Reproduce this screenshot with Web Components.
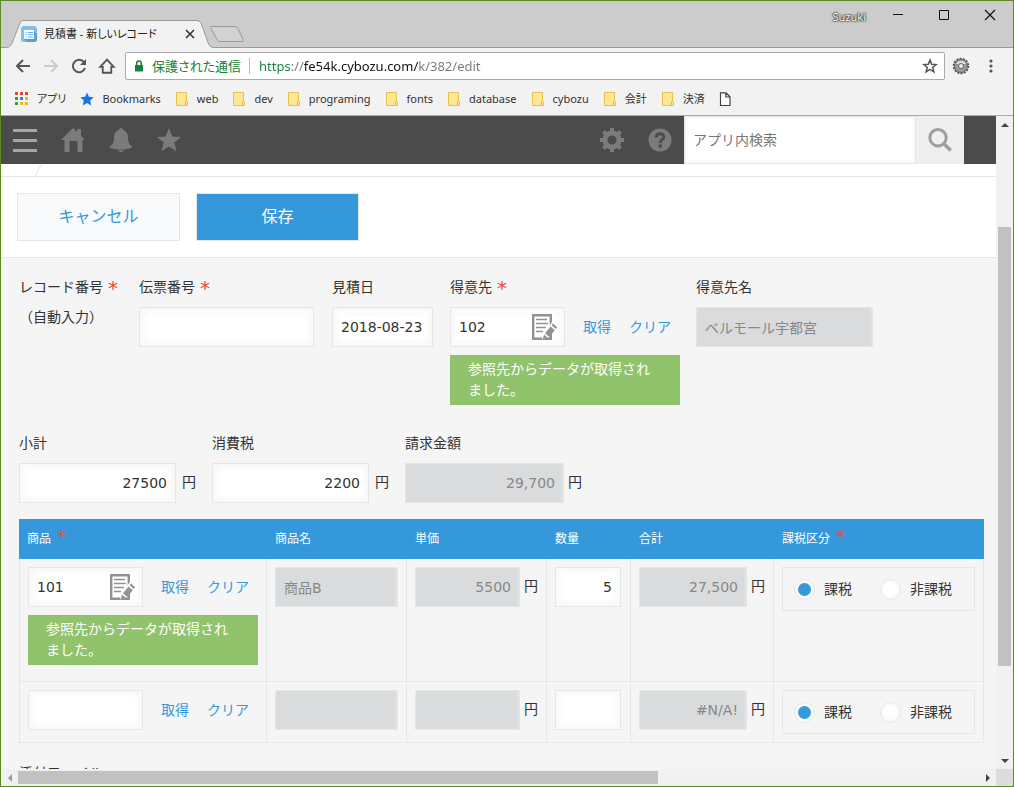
<!DOCTYPE html>
<html lang="ja">
<head>
<meta charset="utf-8">
<title>見積書 - 新しいレコード</title>
<style>
html, body { margin: 0; height: 100%; }
body { font: 14px/20px "DejaVu Sans", "Noto Sans CJK JP", sans-serif; color: #333; overflow: hidden; }
</style>
</head>
<body>
<browser-window>
  <tab-strip slot="tabs" user="Suzuki">見積書 - 新しいレコード</tab-strip>
  <address-bar slot="address"></address-bar>
  <bookmark-bar slot="bookmarks">
    <bookmark-item icon="apps">アプリ</bookmark-item>
    <bookmark-item icon="bluestar">Bookmarks</bookmark-item>
    <bookmark-item icon="folder">web</bookmark-item>
    <bookmark-item icon="folder">dev</bookmark-item>
    <bookmark-item icon="folder">programing</bookmark-item>
    <bookmark-item icon="folder">fonts</bookmark-item>
    <bookmark-item icon="folder">database</bookmark-item>
    <bookmark-item icon="folder">cybozu</bookmark-item>
    <bookmark-item icon="folder">会計</bookmark-item>
    <bookmark-item icon="folder">決済</bookmark-item>
    <bookmark-item icon="page"></bookmark-item>
  </bookmark-bar>
  <app-header></app-header>
  <bread-crumb></bread-crumb>
  <action-bar></action-bar>
  <record-form>
    <form-row>
      <static-field label="レコード番号" required style="--w:104px">（自動入力）</static-field>
      <text-field label="伝票番号" required style="--w:177px;--input:175px"></text-field>
      <text-field label="見積日" value="2018-08-23" style="--w:102px;--input:101px"></text-field>
      <lookup-field label="得意先" required value="102" picker message="参照先からデータが取得されました。"></lookup-field>
      <text-field label="得意先名" value="ベルモール宇都宮" locked style="--input:177px"></text-field>
    </form-row>
    <form-row>
      <text-field label="小計" value="27500" unit="円" numeric style="--w:177px;--input:157px"></text-field>
      <text-field label="消費税" value="2200" unit="円" numeric style="--w:177px;--input:157px"></text-field>
      <text-field label="請求金額" value="29,700" unit="円" numeric locked style="--w:177px;--input:159px"></text-field>
    </form-row>
    <items-table></items-table>
    <form-row>
      <static-field label="添付ファイル"></static-field>
    </form-row>
  </record-form>
</browser-window>

<script>
const ICONS = {
  back: ['0 0 16 16', '<path d="M15 8H2.5M8 2 2 8l6 6" fill="none" stroke="currentColor" stroke-width="2"/>'],
  forward: ['0 0 16 16', '<path d="M1 8h12.500M8 2l6 6-6 6" fill="none" stroke="currentColor" stroke-width="2"/>'],
  reload: ['0 0 16 16', '<path d="M13 4.200A6.200 6.200 0 1 0 14 10" fill="none" stroke="currentColor" stroke-width="2"/><path d="M15 1v6H9z" fill="currentColor"/>'],
  home: ['0 0 16 16', '<path d="M2 8.800 8 2.300l6 6.500h-2.200V14H4.200V8.800z" fill="none" stroke="currentColor" stroke-width="1.600"/>'],
  lock: ['0 0 10 12', '<path d="M2.700 6V3.300a2.300 2.300 0 0 1 4.600 0V6" fill="none" stroke="currentColor" stroke-width="1.500"/><rect x="1" y="5" width="8" height="6.500" fill="currentColor"/>'],
  star: ['0 0 16 16', '<path d="M8 2l1.700 4.300 4.500.3-3.500 2.900 1.200 4.400L8 11.400l-3.900 2.500 1.200-4.400L1.800 6.600l4.500-.3z" fill="none" stroke="currentColor" stroke-width="1.500"/>'],
  extension: ['0 0 18 18', '<circle cx="9" cy="9" r="7" fill="none" stroke="#555" stroke-width="2.500" stroke-dasharray="2 1.140"/><circle cx="9" cy="9" r="6.500" fill="#999" stroke="#666"/><path d="M4 7a5.500 5.500 0 0 1 10 0z" fill="#ddd"/><circle cx="9" cy="9" r="2.500" fill="#eee" stroke="#666"/>'],
  menu: ['0 0 16 16', '<g fill="currentColor"><circle cx="8" cy="3" r="1.600"/><circle cx="8" cy="8" r="1.600"/><circle cx="8" cy="13" r="1.600"/></g>'],
  apps: ['0 0 14 14', '<g><path d="M0 0h3v3H0zM5 0h3v3H5zM10 0h3v3h-3z" fill="#ea4335"/><path d="M0 5h3v3H0zM0 10h3v3H0z" fill="#25a05a"/><path d="M5 5h3v3H5z" fill="#1a8cf0"/><path d="M10 5h3v3h-3zM5 10h3v3H5zM10 10h3v3h-3z" fill="#fbb50c"/></g>'],
  bluestar: ['0 0 14 14', '<path d="M7 .5l1.900 4.300 4.800.5-3.500 3.300 1 4.900L7 11l-4.200 2.500 1-4.900L.3 5.300l4.800-.5z" fill="#1a73e8"/>'],
  folder: ['0 0 14 14', '<path d="M1.500.5h10v8.800l1 1v3.200h-11z" fill="#ffe594" stroke="#e8c14a"/><path d="M10.500 13V9.500h1.500" fill="none" stroke="#e8c14a"/>'],
  page: ['0 0 14 14', '<path d="M1.500.8h5.500l4 4v8.700H1.500zM6.800.8V5H11" fill="#fff" stroke="#444" stroke-width="1.200"/>'],
  min: ['0 0 12 12', '<path d="M1 5.500h10" stroke="#111"/>'],
  max: ['0 0 12 12', '<path d="M1.500 1.500h9v9h-9z" fill="none" stroke="#111"/>'],
  close: ['0 0 12 12', '<path d="M1 1l10 10M11 1 1 11" stroke="#111" stroke-width="1.200"/>'],
  tabclose: ['0 0 12 12', '<path d="M2 2l8 8M10 2l-8 8" stroke="#333" stroke-width="1.600"/>'],
  favicon: ['0 0 16 16', '<rect width="16" height="16" rx="3" fill="#7fbfec"/><path d="M13 5 16 8v5a3 3 0 0 1-3 3H6l-3-3z" fill="#5a9fd2"/><rect x="3" y="4" width="10" height="9" rx="1" fill="#fff"/><path d="M4.500 6.500h1.200M7 6.500h5M4.500 8.700h1.200M7 8.700h5M4.500 11h1.200M7 11h5" stroke="#6aaee0"/>'],
  burger: ['0 0 24 24', '<path d="M0 2.500h24M0 12.500h24M0 22.500h24" stroke="#a6a6a6" stroke-width="3"/>'],
  house: ['0 0 24 24', '<path d="M12 0 16 4V1h4v7l4 4h-2.500v12h-5v-11h-8v11h-5V12H0z" fill="currentColor"/>'],
  bell: ['0 0 24 24', '<path d="M12 0c1.200 0 1.800.7 1.800 1.800C17.500 3 19 6 19 9.500c0 5 1 7 4.800 9.500C21 21 17 21.500 12 21.500S3 21 .2 19C4 16.500 5 14.500 5 9.500 5 6 6.500 3 10.200 1.800 10.200.7 10.800 0 12 0zM9 22.300h6c-.5 1.200-1.500 1.700-3 1.700s-2.500-.5-3-1.700z" fill="currentColor"/>'],
  bigstar: ['0 0 24 24', '<path d="M12 0l3.300 8.400 8.700.6-6.700 5.600 2.200 8.700L12 18.500l-7.500 4.800 2.200-8.700L0 9l8.700-.6z" fill="currentColor"/>'],
  gear: ['0 0 24 24', '<circle cx="12" cy="12" r="7" fill="none" stroke="currentColor" stroke-width="5"/><path d="M12 0v5M12 19v5M0 12h5M19 12h5M3.500 3.500 7 7M17 17l3.500 3.500M20.500 3.500 17 7M7 17l-3.500 3.500" stroke="currentColor" stroke-width="4"/>'],
  help: ['0 0 24 24', '<circle cx="12" cy="12" r="11.500" fill="currentColor"/><path d="M8.200 9.500c0-5 7.600-4.800 7.600-.6 0 2.800-3.600 2.800-3.600 6.100" fill="none" stroke="#4b4b4b" stroke-width="2.800"/><rect x="10.500" y="16.500" width="3.400" height="3.200" fill="#4b4b4b"/>'],
  search: ['0 0 24 24', '<circle cx="10" cy="9.700" r="8.200" fill="none" stroke="#9f9f9f" stroke-width="3"/><path d="M15.500 15.500l7.300 7" stroke="#9f9f9f" stroke-width="3.600"/>'],
  picker: ['0 0 26 28', '<path d="M2.200 2.200h17.600v23.600H2.200z" fill="#fff" stroke="#8f9393" stroke-width="2.400"/><path d="M5 6.500h11M5 10.500h12M5 14.500h10M5 18.500h7" stroke="#8f9393" stroke-width="1.600"/><path d="M11 26.500l1.500-7L21.500 8.500l5 4.500-9.500 11z" fill="#fff"/><path d="M14 20.200l4.200 3.700 5.600-6.700-4.200-3.700zM20.600 12.300l4.200 3.700 1.400-1.700-4.200-3.900zM13 21.500l-1.200 5 4.800-1.800z" fill="#8f9393"/>'],
  up: ['0 0 8 8', '<path d="M0 6 4 2l4 4z" fill="#444"/>'],
  down: ['0 0 8 8', '<path d="M0 2l4 4 4-4z" fill="#444"/>'],
  left: ['0 0 8 8', '<path d="M6 0 2 4l4 4z" fill="#999"/>'],
  right: ['0 0 8 8', '<path d="M2 0l4 4-4 4z" fill="#444"/>']
};
const svg = (name, w = 16, h = w) =>
  `<svg width="${w}" height="${h}" viewBox="${ICONS[name][0]}" aria-hidden="true">${ICONS[name][1]}</svg>`;

const RESET = `
  *{box-sizing:border-box}
  svg{display:block;flex:none}
  button{all:unset;box-sizing:border-box;display:flex;align-items:center;justify-content:center;cursor:pointer;flex:none}
  input{font:inherit;color:inherit;margin:0;min-width:0;border:0;outline:0;background:none}
  a{color:#3498db;text-decoration:none}
`;
const LABEL = `
  label,.label{display:flex;gap:5px;height:20px;margin-bottom:10px;white-space:nowrap}
  .req{color:#e74c3c;font-size:20px;line-height:22px}
`;
const BOX = `
  .box{display:flex;align-items:center;height:40px;background:#fff;border:1px solid #e3e7e8;
    box-shadow:inset 4px 4px 4px #f8f8f8,inset -4px -4px 4px #f8f8f8}
  .box input{flex:1;width:100%;height:100%;padding:0 8px}
`;
class Base extends HTMLElement {
  constructor() { super(); this.attachShadow({ mode: 'open' }); }
  connectedCallback() { this.shadowRoot.innerHTML = `<style>${RESET}</style>` + this.render(); }
  attr(n) { return this.getAttribute(n) || ''; }
  get star() { return this.hasAttribute('required') ? '<span class="req">*</span>' : ''; }
}

customElements.define('browser-window', class extends Base {
  render() { return `<style>
    :host{display:flex;flex-direction:column;height:100vh;box-sizing:border-box;border:1px solid #5b8b22;background:#f2f2f2}
    .view{flex:1;min-height:0;display:grid;grid-template:minmax(0,1fr) 17px / minmax(0,1fr) 17px;border-top:1px solid #aaa}
    main{overflow:hidden;background:#f5f5f5}
    .corner{background:#dcdcdc}
    </style>
    <slot name="tabs"></slot><slot name="address"></slot><slot name="bookmarks"></slot>
    <div class="view"><main><slot></slot></main>
      <scroll-bar direction="column" start="up" end="down" style="--a:94;--b:439;--c:86"></scroll-bar>
      <scroll-bar direction="row" start="left" end="right" style="--a:0;--b:640;--c:321"></scroll-bar>
      <div class="corner"></div></div>`; }
});

customElements.define('scroll-bar', class extends Base {
  render() { return `<style>
    :host{display:flex;flex-direction:${this.attr('direction')};background:#f1f1f1}
    .end{flex:none;width:17px;height:17px;display:grid;place-items:center}
    i{flex:var(--a) 0 0px} b{flex:var(--b) 0 0px;background:#c1c1c1;margin:${this.attr('direction') === 'row' ? '2px 0' : '0 2px'}} u{flex:var(--c) 0 0px}
    </style><span class="end">${svg(this.attr('start'), 8)}</span><i></i><b></b><u></u><span class="end">${svg(this.attr('end'), 8)}</span>`; }
});

customElements.define('tab-strip', class extends Base {
  render() { return `<style>
    :host{display:flex;align-items:flex-end;height:47px;background:#ccc;border-bottom:1px solid #999;box-sizing:border-box;
      font:12px/16px "Noto Sans","Noto Sans CJK JP",sans-serif;color:#222;flex:none}
    .tab{display:grid;width:208px;height:28px;margin:0 0 -1px 5px}
    .tab>*{grid-area:1/1}
    .text{display:flex;align-items:center;gap:7px;padding:0 18px 0 15px}
    .text span{flex:1;white-space:nowrap;font-size:11px;font-feature-settings:"palt"}
    .new{margin:0 0 4px -5px}
    .user{margin-left:auto;align-self:flex-start;margin-top:8px;color:#fff;font-size:11px;
      text-shadow:0 0 2px #222,0 0 2px #222,0 0 1px #222}
    .win{display:flex;align-self:flex-start;margin-left:9px}
    .win button{width:46px;height:28px}
    </style>
    <div class="tab"><svg width="208" height="28" viewBox="0 0 208 28"><path d="M.5 27.500C6 27 5 25 14 3Q15.500.5 17 .5H191Q193.500.5 195 3C203 24 202 27 207.500 27.500V28H0z" fill="#f2f2f2"/><path d="M.5 27.500C6 27 5 25 14 3Q15.500.5 17 .5H191Q193.500.5 195 3C203 24 202 27 207.500 27.500" fill="none" stroke="#999"/></svg>
      <div class="text">${svg('favicon', 16)}<span><slot></slot></span><button aria-label="タブを閉じる">${svg('tabclose', 12)}</button></div></div>
    <button class="new" aria-label="新しいタブ"><svg width="36" height="18" viewBox="0 0 36 18"><path d="M2 1.500h24q2 0 3 2l5 11q1 2-1 2H11q-2 0-3-2l-6-11q-1-2 0-2z" fill="#d2d2d2" stroke="#999"/></svg></button>
    <span class="user">${this.attr('user')}</span>
    <div class="win"><button aria-label="最小化">${svg('min', 12)}</button><button aria-label="最大化">${svg('max', 12)}</button><button aria-label="閉じる">${svg('close', 12)}</button></div>`; }
});

customElements.define('address-bar', class extends Base {
  render() { return `<style>
    :host{display:flex;align-items:center;height:36px;padding:0 8px;color:#555;flex:none;
      font:13px/20px "Noto Sans","Noto Sans CJK JP",sans-serif}
    button{width:28px;height:28px}
    .off{color:#ccc}
    .ext{margin:0 2px}
    .omni{flex:1;display:flex;align-items:center;height:28px;margin:0 0 0 4px;padding:0 0 0 8px;background:#fff;border:1px solid #aaa;border-radius:2px}
    .safe{display:flex;align-items:center;gap:8px;color:#188038;font-feature-settings:"palt";
      white-space:nowrap;padding-right:8px;border-right:1px solid #bbb;line-height:16px}
    input{flex:1;height:100%;padding:0 0 0 9px;color:#777}
    input{background:linear-gradient(90deg,#188038 42px,#777 42px 54px,#111 54px 169px,#777 169px) text;-webkit-text-fill-color:transparent}
    </style>
    <button aria-label="戻る">${svg('back')}</button><button class="off" aria-label="進む">${svg('forward')}</button>
    <button aria-label="再読み込み">${svg('reload')}</button><button aria-label="ホーム">${svg('home', 18)}</button>
    <div class="omni"><span class="safe">${svg('lock', 10, 12)}保護された通信</span>
      <input aria-label="アドレス" value="https://fe54k.cybozu.com/k/382/edit"><button aria-label="ブックマーク">${svg('star')}</button></div>
    <button class="ext" aria-label="拡張機能">${svg('extension', 18)}</button><button aria-label="メニュー">${svg('menu')}</button>`; }
});

customElements.define('bookmark-bar', class extends Base {
  render() { return `<style>:host{display:flex;align-items:center;gap:14px;height:30px;padding:0 14px;margin-bottom:1px;color:#333;flex:none;overflow:hidden;
    font:11px/16px "Noto Sans","Noto Sans CJK JP",sans-serif}</style><slot></slot>`; }
});
customElements.define('bookmark-item', class extends Base {
  render() { return `<style>:host{display:block;flex:none} a{display:flex;gap:8px;align-items:center;color:inherit;font-feature-settings:"palt"}</style>
    <a href="#" aria-label="${this.textContent || 'ページ'}">${svg(this.attr('icon'), 14)}<slot></slot></a>`; }
});

customElements.define('app-header', class extends Base {
  render() { return `<style>
    :host{display:flex;height:48px;background:#4b4b4b;color:#7b7b7b;padding-right:32px}
    button{width:48px;height:48px}
    .gap{flex:1}
    input{width:232px;padding:0 8px;background:#fff;border:1px solid #e3e7e8;box-shadow:inset 0 0 4px #eee;color:#333}
    input::placeholder{color:#777;opacity:1}
    .go{background:#efefef}
    </style>
    <button aria-label="メニュー">${svg('burger', 24)}</button><button aria-label="ポータル">${svg('house', 24)}</button>
    <button aria-label="通知">${svg('bell', 24)}</button><button aria-label="ブックマーク">${svg('bigstar', 24)}</button>
    <span class="gap"></span>
    <button aria-label="設定">${svg('gear', 24)}</button><button aria-label="ヘルプ">${svg('help', 24)}</button>
    <input type="search" placeholder="アプリ内検索" aria-label="アプリ内検索"><button class="go" aria-label="検索">${svg('search', 24)}</button>`; }
});

customElements.define('bread-crumb', class extends Base {
  render() { return `<style>:host{display:block;height:13px;box-sizing:border-box;background:#fff;border-bottom:1px solid #e3e7e8;padding-left:33px}</style>
    <svg width="8" height="12" viewBox="0 0 8 12"><path d="M7.500 0 1 12" stroke="#e3e7e8"/></svg>`; }
});

customElements.define('action-bar', class extends Base {
  render() { return `<style>
    :host{display:flex;gap:16px;padding:16px;background:#fff;border-bottom:1px solid #e3e7e8}
    button{width:163px;height:48px;font-size:16px;border:1px solid #e3e7e8;background:#f7f9fa;color:#3498db}
    .save{background:#3498db;color:#fff}
    </style><button>キャンセル</button><button class="save">保存</button>`; }
});

customElements.define('record-form', class extends Base {
  render() { return `<style>:host{display:block;padding:19px 12px 0 18px}</style><slot></slot>`; }
});
customElements.define('form-row', class extends Base {
  render() { return `<style>:host{display:flex;align-items:flex-start;gap:16px;margin-bottom:16px}:host(:first-child){margin-bottom:20px}</style><slot></slot>`; }
});

customElements.define('static-field', class extends Base {
  render() { return `<style>${LABEL} :host{display:block;flex:none;width:var(--w,auto);white-space:nowrap}</style>
    <div class="label">${this.attr('label')}${this.star}</div><slot></slot>`; }
});

customElements.define('text-field', class extends Base {
  render() {
    const label = this.attr('label'), locked = this.hasAttribute('locked');
    return `<style>${LABEL}${BOX}
    :host{display:block;flex:none;width:var(--w,auto)}
    .line{display:flex;justify-content:space-between}
    .box{width:var(--input)}
    .locked{background:#dadbdc;box-shadow:inset -2px 0 0 #e0e1e2;color:#888}
    .num input{text-align:right}
    .unit{line-height:38px}
    </style>${label ? `<label for="f">${label}${this.star}</label>` : ''}
    <div class="line"><div class="box${locked ? ' locked' : ''}${this.hasAttribute('numeric') ? ' num' : ''}">
      <input id="f" value="${this.attr('value')}" ${label ? '' : `aria-label="${this.attr('name')}"`} ${locked ? 'readonly' : ''}></div>
      ${this.hasAttribute('unit') ? `<span class="unit">${this.attr('unit')}</span>` : ''}</div>`;
  }
});

customElements.define('lookup-field', class extends Base {
  render() {
    const label = this.attr('label');
    return `<style>${LABEL}${BOX}
    :host{display:block;flex:none;width:230px}
    .line{display:flex;align-items:center;gap:18px}
    .box{width:115px}
    .box button{margin-right:7px}
    p{margin:8px 0;padding:4px 18px;background:#91c36c;color:#fff;line-height:21px}
    </style>${label ? `<label for="f">${label}${this.star}</label>` : ''}
    <div class="line"><div class="box"><input id="f" value="${this.attr('value')}" ${label ? '' : `aria-label="${this.attr('name')}"`}>
      ${this.hasAttribute('picker') ? `<button aria-label="参照先">${svg('picker', 26, 28)}</button>` : ''}</div>
      <a href="#">取得</a><a href="#">クリア</a></div>
    ${this.hasAttribute('message') ? `<p>${this.attr('message')}</p>` : ''}`;
  }
});

customElements.define('choice-field', class extends Base {
  render() { return `<style>
    :host{display:block}
    fieldset{display:flex;gap:28px;height:44px;margin:0;padding:0 11px;border:1px solid #e3e7e8}
    label{display:flex;align-items:center;gap:9px;white-space:nowrap}
    input{appearance:none;width:21px;height:21px;border:1px solid #e3e7e8;border-radius:50%;background:#fff;box-shadow:inset 0 0 4px #eee}
    input:checked{background:radial-gradient(circle,#3498db 6px,#fff 7px)}
    </style><fieldset aria-label="課税区分"><label><input type="radio" name="tax" checked>課税</label><label><input type="radio" name="tax">非課税</label></fieldset>`; }
});

customElements.define('items-table', class extends Base {
  render() {
    const row = (r) => `<tr>
      <td><lookup-field name="商品" value="${r.code}" ${r.done ? 'picker message="参照先からデータが取得されました。"' : ''}></lookup-field></td>
      <td><text-field name="商品名" value="${r.name}" locked style="--input:123px"></text-field></td>
      <td><text-field name="単価" value="${r.price}" unit="円" numeric locked style="--input:105px"></text-field></td>
      <td><text-field name="数量" value="${r.count}" numeric style="--input:66px"></text-field></td>
      <td><text-field name="合計" value="${r.total}" unit="円" numeric locked style="--input:108px"></text-field></td>
      <td><choice-field></choice-field></td></tr>`;
    return `<style>
    :host{display:block;margin-bottom:20px}
    table{border-spacing:0;table-layout:fixed;width:965px}
    th{height:40px;padding:0 8px;background:#3498db;color:#fff;font-size:12px;font-weight:400;text-align:left}
    .req{color:#e74c3c;font-size:18px;line-height:16px;vertical-align:top;margin-left:6px}
    td{padding:8px;vertical-align:top;border:solid #e3e7e8;border-width:0 1px 1px 0}
    td:first-child{border-left-width:1px}
    .c1{width:248px}.c2{width:140px}.c4{width:84px}.c5{width:143px}.c6{width:210px}
    </style><table><colgroup><col class="c1"><col class="c2"><col class="c2"><col class="c4"><col class="c5"><col class="c6"></colgroup>
    <thead><tr><th>商品<span class="req">*</span></th><th>商品名</th><th>単価</th><th>数量</th><th>合計</th><th>課税区分<span class="req">*</span></th></tr></thead>
    <tbody>${row({ code: '101', done: true, name: '商品B', price: '5500', count: '5', total: '27,500' })}${row({ code: '', name: '', price: '', count: '', total: '#N/A!' })}</tbody></table>`;
  }
});
</script>
</body>
</html>
